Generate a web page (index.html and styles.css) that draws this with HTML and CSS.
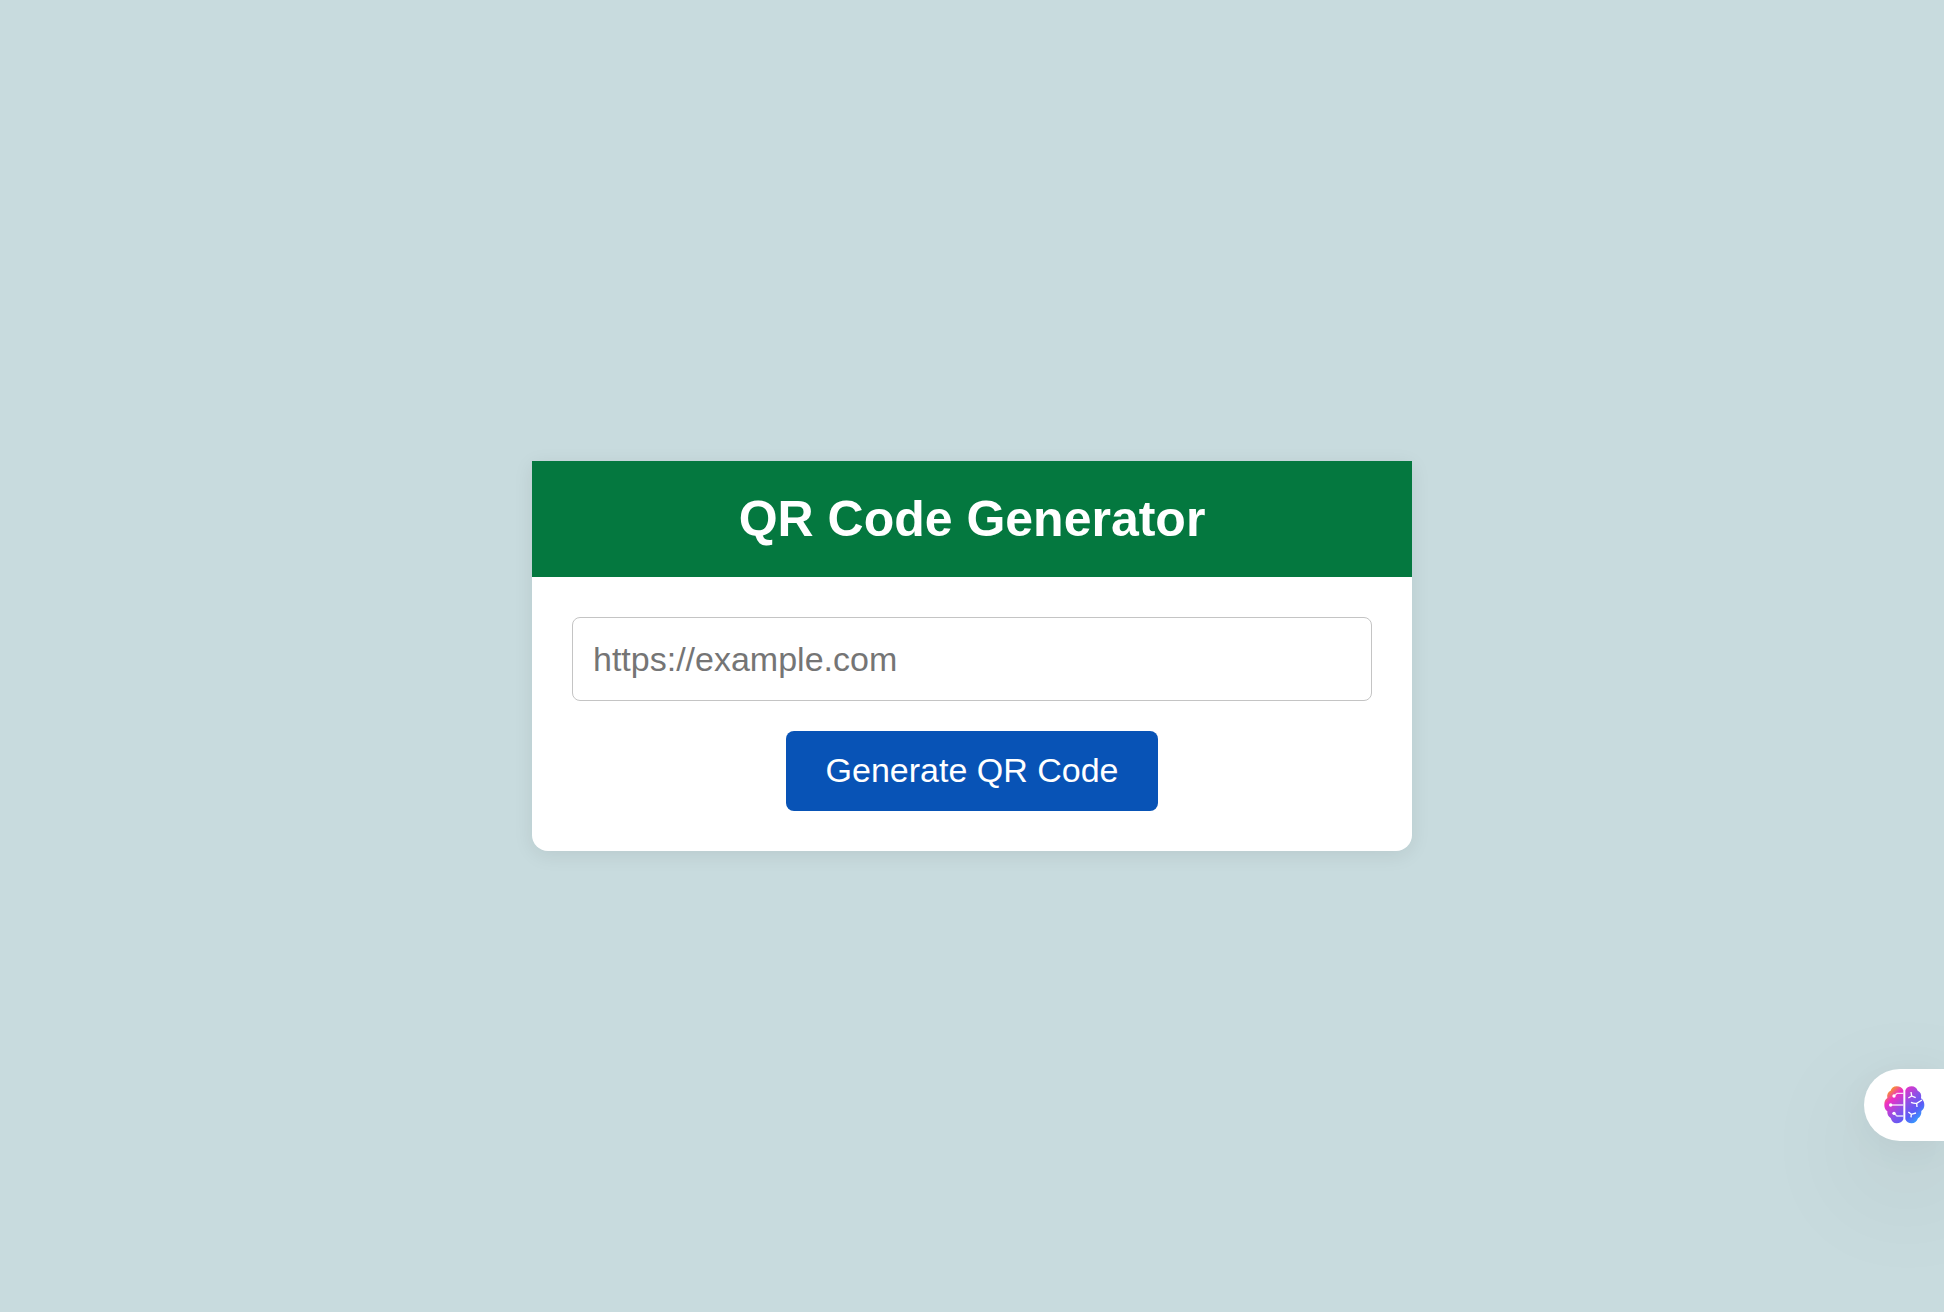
FILE: index.html
```html
<!DOCTYPE html>
<html lang="en">
<head>
  <meta charset="utf-8">
  <meta name="viewport" content="width=device-width, initial-scale=1">
  <title>QR Code Generator</title>
  <link rel="stylesheet" href="styles.css">
</head>
<body>
  <main class="card">
    <h1 class="card-title">QR Code Generator</h1>
    <form class="card-body">
      <input class="url-input" type="url" placeholder="https://example.com" aria-label="URL to encode">
      <button class="generate-button" type="button">Generate QR Code</button>
    </form>
  </main>

  <button class="assistant-tab" type="button" aria-label="Open assistant">
    <svg class="assistant-icon" viewBox="92 96 123 114" aria-hidden="true">
      <defs>
        <linearGradient id="brain" gradientUnits="userSpaceOnUse" x1="108" y1="106" x2="198" y2="202">
          <stop offset="0" stop-color="#f9a11b"/>
          <stop offset="0.2" stop-color="#ee2fc4"/>
          <stop offset="0.52" stop-color="#8a52e8"/>
          <stop offset="0.75" stop-color="#5b5cf6"/>
          <stop offset="1" stop-color="#2fa8ff"/>
        </linearGradient>
      </defs>
      <g fill="url(#brain)">
        <path d="M150 109C147 101 139 97 130 97C120 97 114 103 112 110C104 113 100 121 102 132C95 137 93 143 93 153C93 162 96 168 102 172C101 181 105 188 112 192C115 202 121 208 130 208C139 208 147 204 150 196Z"/>
        <path d="M156 109C159 101 166 97 175 97C184 97 190 102 193 110C202 114 205 121 203 133C210 138 213 145 213 153C213 161 210 167 204 171C205 182 200 189 194 193C190 203 184 208 175 208C166 208 159 204 156 196Z"/>
      </g>
      <g fill="none" stroke="#fff" stroke-width="4">
        <path d="M150 118H131L122 126M150 153H112M150 186H131L122 178" stroke-opacity="0.8"/>
        <path d="M173 114L175 126L165 132M175 126L187 131M173 145Q182 149 190 148L206 138M190 148L191 159M165 174L174 181L188 177M174 181L173 190"/>
      </g>
      <g fill="#fff">
        <circle cx="122" cy="126" r="5"/>
        <circle cx="112" cy="153" r="5"/>
        <circle cx="122" cy="178" r="5"/>
      </g>
    </svg>
  </button>
</body>
</html>
```
FILE: styles.css
```css
* {
  box-sizing: border-box;
}

body {
  display: flex;
  align-items: center;
  justify-content: center;
  min-height: 100vh;
  margin: 0;
  overflow-x: hidden;
  background: #c8dbde;
  font-family: "Liberation Sans", Arial, sans-serif;
}

.card {
  width: 100%;
  max-width: 880px;
  margin: 0 20px;
  background: #fff;
  border-radius: 0 0 16px 16px;
  box-shadow: 0 4px 20px rgba(0, 0, 0, 0.08);
}

.card-title {
  margin: 0;
  padding: 30px;
  background: #04783f;
  color: #fff;
  font-size: 50px;
  line-height: 56px;
  text-align: center;
}

.card-body {
  display: flex;
  flex-direction: column;
  align-items: center;
  gap: 30px;
  padding: 40px;
}

.url-input {
  width: 100%;
  padding: 20px;
  border: 1px solid #c4c4c4;
  border-radius: 8px;
  background: #fff;
  font: 34px/42px "Liberation Sans", Arial, sans-serif;
}

.url-input::placeholder {
  color: #757575;
}

.generate-button {
  padding: 19px 40px 21px;
  border: 0;
  border-radius: 8px;
  background: #0853b6;
  color: #fff;
  font: 34px/40px "Liberation Sans", Arial, sans-serif;
  cursor: pointer;
}

.assistant-tab {
  position: fixed;
  right: 0;
  bottom: 171px;
  display: flex;
  align-items: center;
  width: 80px;
  height: 72px;
  padding: 0 0 0 20px;
  border: 0;
  border-radius: 36px 0 0 36px;
  background: #fff;
  box-shadow: 0 40px 120px rgba(0, 0, 0, 0.12), 0 8px 48px rgba(0, 0, 0, 0.06);
  cursor: pointer;
}

.assistant-icon {
  width: 41px;
  height: 38px;
}
```
